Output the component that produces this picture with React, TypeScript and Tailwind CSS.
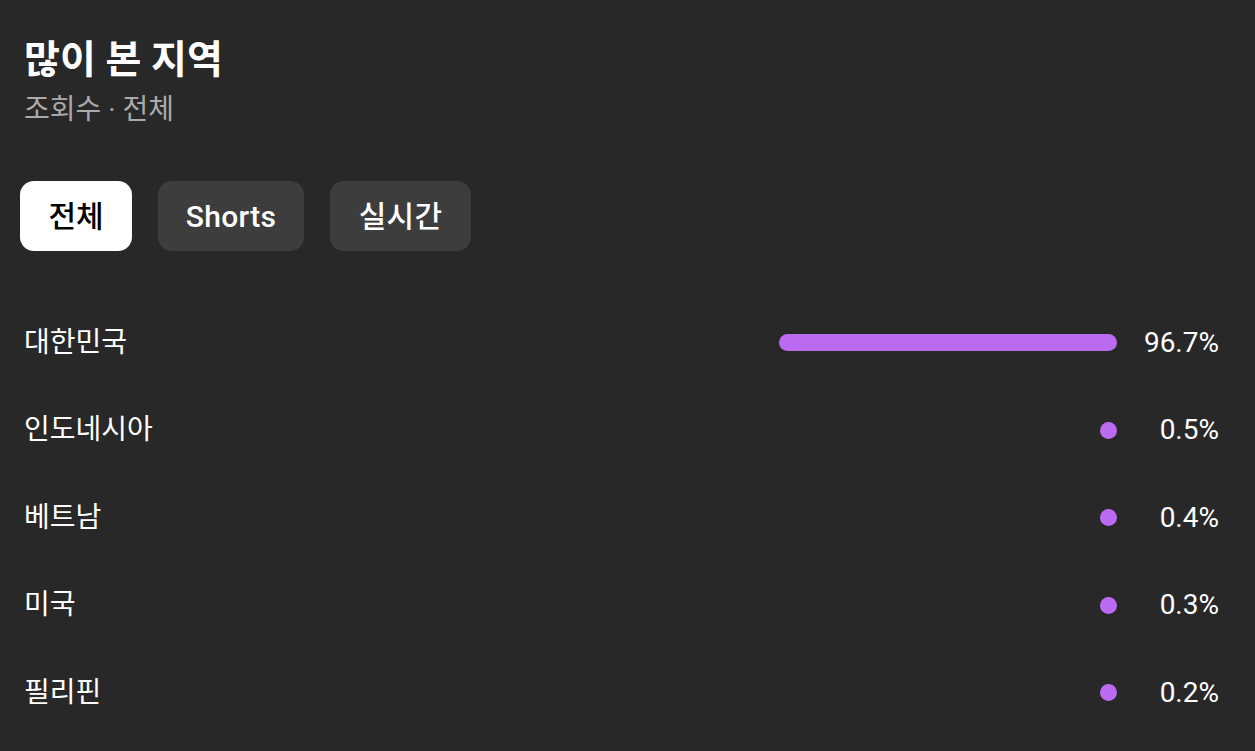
const font = "font-['Roboto','Noto_Sans_CJK_KR',sans-serif]";

const regions = [
  { name: "대한민국", value: 96.7 },
  { name: "인도네시아", value: 0.5 },
  { name: "베트남", value: 0.4 },
  { name: "미국", value: 0.3 },
  { name: "필리핀", value: 0.2 },
];

const tabs = [
  { label: "전체", width: "w-[112px]" },
  { label: "Shorts", width: "w-[146px]" },
  { label: "실시간", width: "w-[141px]" },
];

export default function App() {
  return (
    <div className={`min-h-[751px] w-full bg-[#282828] text-white ${font}`}>
      <div className="pl-[24px] pt-[31px]">
        <h1 className="text-[39px] font-bold leading-[58px]">많이 본 지역</h1>
        <p className="mt-[3px] text-[28px] leading-[36px] text-[#aaaaaa]">조회수 · 전체</p>
      </div>

      <div className="mt-[53px] flex gap-[26px] pl-5">
        {tabs.map((t, i) => (
          <button
            key={t.label}
            className={
              i === 0
                ? `h-[70px] ${t.width} rounded-[14px] bg-white text-[30px] font-medium text-black`
                : `h-[70px] ${t.width} rounded-[14px] bg-[#3d3d3d] text-[30px] font-medium tracking-[0.3px] text-white`
            }
          >
            {t.label}
          </button>
        ))}
      </div>

      <div className="mt-[48px] flex flex-col pl-[24px] pr-[36px]">
        {regions.map((r) => (
          <div key={r.name} className="flex h-[87.5px] items-center">
            <span className="flex-1 text-[28px]">{r.name}</span>
            <div className="flex w-[350px] justify-end">
              <div
                className="h-[17px] min-w-[17px] rounded-full bg-[#bb6bf2]"
                style={{ width: `${(r.value / 96.7) * 338}px` }}
              />
            </div>
            <span className="w-[102px] text-right text-[28px]">{r.value}%</span>
          </div>
        ))}
      </div>
    </div>
  );
}
